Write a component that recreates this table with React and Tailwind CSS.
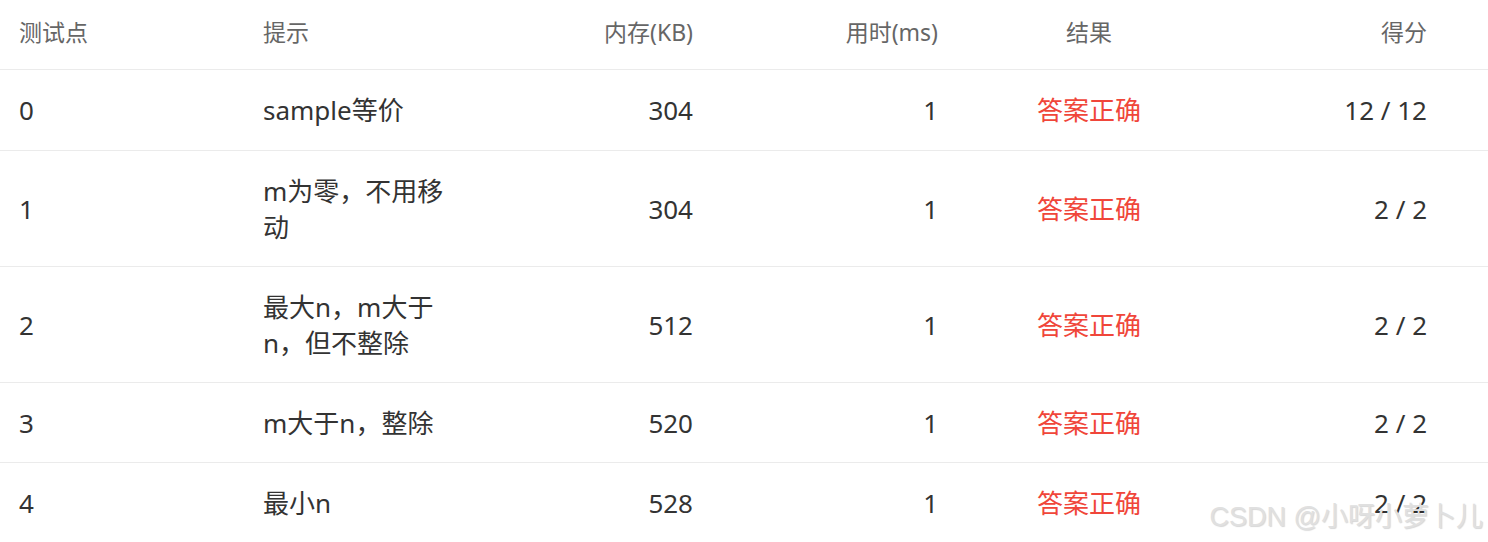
import React from "react";

const rows = [
  { id: "0", hint: ["sample等价"], mem: "304", time: "1", score: "12 / 12" },
  { id: "1", hint: ["m为零，不用移", "动"], mem: "304", time: "1", score: "2 / 2" },
  { id: "2", hint: ["最大n，m大于", "n，但不整除"], mem: "512", time: "1", score: "2 / 2" },
  { id: "3", hint: ["m大于n，整除"], mem: "520", time: "1", score: "2 / 2" },
  { id: "4", hint: ["最小n"], mem: "528", time: "1", score: "2 / 2" },
];

const grid = "grid grid-cols-[244px_234px_234px_245px_264px_1fr]";

export default function App() {
  return (
    <div
      className="relative w-[1488px] h-[542px] overflow-hidden bg-white"
      style={{ fontFamily: '"Noto Sans", "Noto Sans CJK SC", sans-serif' }}
    >
      <div className={`${grid} h-[70px] border-b border-[#ebebeb] text-[23px] leading-[36px] text-[#666666] pt-[14px]`}>
        <div className="pl-[19px]">测试点</div>
        <div className="pl-[19px]">提示</div>
        <div className="pr-[19px] text-right">内存(KB)</div>
        <div className="pr-[19px] text-right">用时(ms)</div>
        <div className="text-center">结果</div>
        <div className="pr-[61px] text-right">得分</div>
      </div>
      {rows.map((r, idx) => (
        <div
          key={r.id}
          className={`${grid} items-center border-b border-[#ebebeb] pt-[22px] ${idx === 0 ? "pb-[22px]" : "pb-[21px]"} text-[26px] leading-[36px] text-[#333333]`}
        >
          <div className="pl-[19px]">{r.id}</div>
          <div className="pl-[19px]">
            {r.hint.map((h, i) => (
              <div key={i}>{h}</div>
            ))}
          </div>
          <div className="pr-[19px] text-right">{r.mem}</div>
          <div className="pr-[19px] text-right">{r.time}</div>
          <div className="text-center text-[#f0463a]">答案正确</div>
          <div className="pr-[61px] text-right">{r.score}</div>
        </div>
      ))}
      <div
        className="absolute right-[5px] bottom-[7px] text-[27px] leading-[36px] text-[#e0e0e0]"
        style={{
          fontFamily: '"Liberation Sans", "Noto Sans CJK SC", sans-serif',
          textShadow: "1px 1px 1px rgba(0,0,0,0.16)",
        }}
      >
        CSDN @小呀小萝卜儿
      </div>
    </div>
  );
}
